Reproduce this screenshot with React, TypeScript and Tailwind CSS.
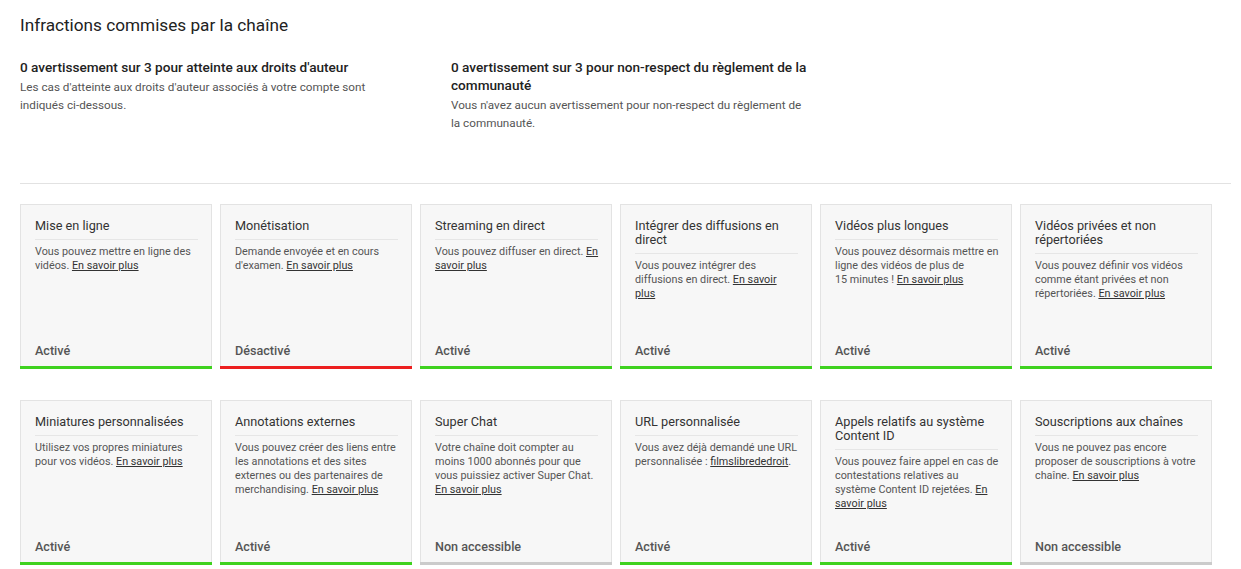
const cards: { title: string; text: string; link?: string; status: string; state: 'on' | 'off' | 'na' }[][] = [
  [
    { title: 'Mise en ligne', text: 'Vous pouvez mettre en ligne des vidéos.', link: 'En savoir plus', status: 'Activé', state: 'on' },
    { title: 'Monétisation', text: "Demande envoyée et en cours d'examen.", link: 'En savoir plus', status: 'Désactivé', state: 'off' },
    { title: 'Streaming en direct', text: 'Vous pouvez diffuser en direct.', link: 'En savoir plus', status: 'Activé', state: 'on' },
    { title: 'Intégrer des diffusions en direct', text: 'Vous pouvez intégrer des diffusions en direct.', link: 'En savoir plus', status: 'Activé', state: 'on' },
    { title: 'Vidéos plus longues', text: 'Vous pouvez désormais mettre en ligne des vidéos de plus de 15\u00a0minutes !', link: 'En savoir plus', status: 'Activé', state: 'on' },
    { title: 'Vidéos privées et non répertoriées', text: 'Vous pouvez définir vos vidéos comme étant privées et non répertoriées.', link: 'En savoir plus', status: 'Activé', state: 'on' },
  ],
  [
    { title: 'Miniatures personnalisées', text: 'Utilisez vos propres miniatures pour vos vidéos.', link: 'En savoir plus', status: 'Activé', state: 'on' },
    { title: 'Annotations externes', text: 'Vous pouvez créer des liens entre les annotations et des sites externes ou des partenaires de merchandising.', link: 'En savoir plus', status: 'Activé', state: 'on' },
    { title: 'Super Chat', text: 'Votre chaîne doit compter au moins 1000 abonnés pour que vous puissiez activer Super Chat.', link: 'En savoir plus', status: 'Non accessible', state: 'na' },
    { title: 'URL personnalisée', text: 'Vous avez déjà demandé une URL personnalisée :', link: 'filmslibrededroit', status: 'Activé', state: 'on' },
    { title: 'Appels relatifs au système Content ID', text: 'Vous pouvez faire appel en cas de contestations relatives au système Content ID rejetées.', link: 'En savoir plus', status: 'Activé', state: 'on' },
    { title: 'Souscriptions aux chaînes', text: 'Vous ne pouvez pas encore proposer de souscriptions à votre chaîne.', link: 'En savoir plus', status: 'Non accessible', state: 'na' },
  ],
]

function Card({ c }: { c: (typeof cards)[0][0] }) {
  const bar = c.state === 'on' ? 'bg-[#3fd21f]' : c.state === 'off' ? 'bg-[#ec1f1f]' : 'bg-[#cbcbcb]'
  return (
    <div className="flex h-[165px] w-[192px] flex-col">
      <div className="flex flex-1 flex-col border-x border-t border-[#e3e3e3] bg-[#f7f7f7] pl-[14px] pr-[12px] pt-[14px]">
        <div className="mr-px border-b border-[#e6e6e6] pb-[6px] text-[12.7px] leading-[14px] text-[#333]">{c.title}</div>
        <p className="mt-[5px] text-[10.8px] leading-[14px] text-[#555]">
          {c.text}{' '}
          <a className="text-[#333] underline">{c.link}</a>
          {c.link === 'filmslibrededroit' ? '.' : ''}
        </p>
        <div className="mt-auto pb-[7px] text-[12.6px] font-medium leading-[16px] text-[#555]">{c.status}</div>
      </div>
      <div className={`h-[3px] ${bar}`} />
    </div>
  )
}

export default function App() {
  return (
    <div className="min-h-[569px] bg-white px-5 pt-[13px] font-['Roboto',sans-serif]">
      <h1 className="text-[17.2px] leading-6 text-[#222]">Infractions commises par la chaîne</h1>
      <div className="mt-[21px] flex">
        <div className="w-[431px] pr-[65px]">
          <h2 className="text-[13.6px] font-medium leading-[18px] text-[#222]">0 avertissement sur 3 pour atteinte aux droits d'auteur</h2>
          <p className="mt-[2px] text-[11.7px] leading-[18px] text-[#555]">Les cas d'atteinte aux droits d'auteur associés à votre compte sont indiqués ci-dessous.</p>
        </div>
        <div className="w-[362px]">
          <h2 className="text-[13.6px] font-medium leading-[18px] text-[#222]">0 avertissement sur 3 pour non-respect du règlement de la communauté</h2>
          <p className="mt-[2px] text-[11.7px] leading-[18px] text-[#555]">Vous n'avez aucun avertissement pour non-respect du règlement de la communauté.</p>
        </div>
      </div>
      <div className="mt-[51px] mr-[-10px] border-t border-[#e2e2e2]" />
      <div className="mt-5 flex flex-col gap-[31px]">
        {cards.map((row, i) => (
          <div key={i} className="flex gap-2">
            {row.map((c) => (
              <Card key={c.title} c={c} />
            ))}
          </div>
        ))}
      </div>
    </div>
  )
}
